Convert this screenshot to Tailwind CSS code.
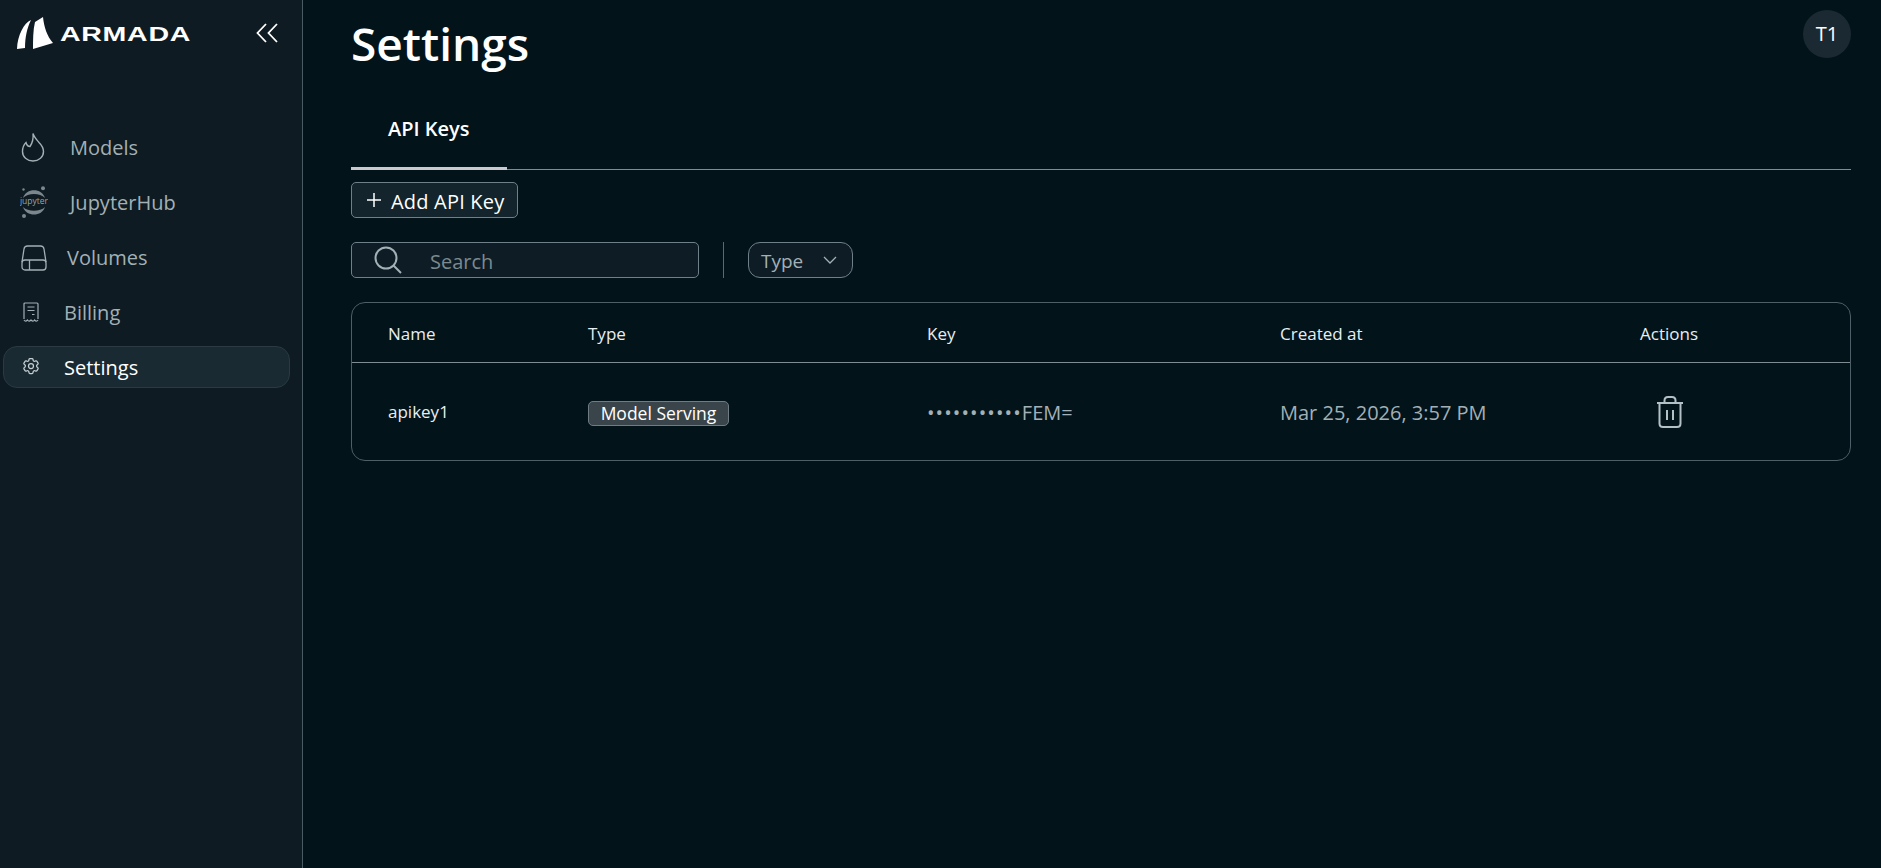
<!DOCTYPE html>
<html lang="en">
<head>
    <meta charset="UTF-8">
    <title>Armada - Settings</title>
    <script src="https://cdn.jsdelivr.net/npm/@tailwindcss/browser@4"></script>
</head>
<body class="bg-[#02131a] font-['Open_Sans',sans-serif] text-white overflow-hidden">
<div class="flex h-[868px]">
    <!-- sidebar -->
    <aside class="w-[303px] shrink-0 bg-[#0e1b22] border-r border-[#4a5a62] flex flex-col">
        <div class="flex items-center h-[66px]">
            <svg class="ml-[16px] w-[38px] h-[35px]" viewBox="0 0 38 35" fill="#fff"><path d="M15 4 C8 7 1.5 19 1 33 L9 32 C9 21 11 12 15 4Z"/><path d="M27 1 L19 6 C17 14 17 24 17 33 L37 27 C31 20 28 11 27 1Z"/></svg>
            <span class="ml-[6px] w-[130px] block font-['Liberation_Sans',sans-serif] font-bold text-[21px] leading-none tracking-[0.5px] scale-x-[1.36] origin-left">ARMADA</span>
            <svg class="ml-[66px] w-[22px] h-[20px] text-white" viewBox="0 0 22 20" fill="none" stroke="currentColor" stroke-width="1.8"><path d="M10 1 L1.5 10 L10 19"/><path d="M21 1 L12.5 10 L21 19"/></svg>
        </div>
        <nav class="mt-[54px] flex flex-col text-[20px] text-[#a3b0b5]">
            <a class="flex items-center h-[55px] pl-[21px]">
                <svg class="w-[24px] h-[30px] -mt-[2px]" viewBox="0 0 24 30" fill="none" stroke="currentColor" stroke-width="1.4"><path d="M12 1.5 C13 5 15.5 7.5 18 10.5 C21 13.5 22.5 16 22.5 19.5 C22.5 25 18 29 12 29 C6 29 1.5 25 1.5 19.5 C1.5 16 2.5 13 5 10.5 C5.5 12.5 7 14.5 9 14.5 C11 11.5 12.5 6 12 1.5Z"/></svg>
                <span class="ml-[25px]">Models</span>
            </a>
            <a class="flex items-center h-[55px] pl-[20px]">
                <svg class="w-[28px] h-[32px] -mt-[2px]" viewBox="0 0 28 32" fill="#7b878c">
                    <circle cx="3.5" cy="3.5" r="1.2"/><circle cx="23" cy="2.2" r="2"/><circle cx="4" cy="30" r="2"/>
                    <path d="M3 12 C6 1.5 22 1.5 25 12 C20 6.5 8 6.5 3 12Z"/>
                    <path d="M3 21 C8 26 20 26 25 21 C22 31 6 31 3 21Z"/>
                    <text x="14" y="18" text-anchor="middle" font-size="8.5" font-family="Open Sans" fill="#98a4a9">jupyter</text>
                </svg>
                <span class="ml-[22px]">JupyterHub</span>
            </a>
            <a class="flex items-center h-[55px] pl-[21px]">
                <svg class="w-[26px] h-[26px]" viewBox="0 0 26 26" fill="none" stroke="currentColor" stroke-width="1.3"><path d="M1 17 L3 4 C3.3 2 4.5 1 6.5 1 H19.5 C21.5 1 22.7 2 23 4 L25 17"/><rect x="1" y="15" width="24" height="10" rx="3"/><path d="M8.5 15 V25"/></svg>
                <span class="ml-[20px]">Volumes</span>
            </a>
            <a class="flex items-center h-[55px] pl-[23px]">
                <svg class="w-[16px] h-[20px] -mt-[2px]" viewBox="0 0 16 20" fill="none" stroke="currentColor" stroke-width="1.2"><path d="M1 17 V2 C1 1.3 1.3 1 2 1 H14 C14.7 1 15 1.3 15 2 V17"/><path d="M1 18 C2 19.5 3 19.5 4.5 18 C5.5 19.5 6.5 19.5 8 18 C9.5 19.5 10.5 19.5 11.5 18 C13 19.5 14 19.5 15 18"/><path d="M4.5 5 H11.5 M4.5 8.5 H11.5 M9 12.5 H11.5"/></svg>
                <span class="ml-[25px]">Billing</span>
            </a>
            <a class="flex items-center h-[42px] mt-[6px] ml-[3px] w-[287px] pl-[18px] rounded-[14px] bg-[#1a2a32] border border-[#2a3a42] text-white">
                <svg class="w-[20px] h-[20px] -mt-[3px] -ml-[1px]" viewBox="0 0 24 24" fill="none" stroke="#c5ced1" stroke-width="1.5"><path d="M9.594 3.94c.09-.542.56-.94 1.11-.94h2.593c.55 0 1.02.398 1.11.94l.213 1.281c.063.374.313.686.645.87.074.04.147.083.22.127.325.196.72.257 1.075.124l1.217-.456a1.125 1.125 0 0 1 1.37.49l1.296 2.247a1.125 1.125 0 0 1-.26 1.431l-1.003.827c-.293.241-.438.613-.43.992a7.723 7.723 0 0 1 0 .255c-.008.378.137.75.43.991l1.004.827c.424.35.534.955.26 1.43l-1.298 2.247a1.125 1.125 0 0 1-1.369.491l-1.217-.456c-.355-.133-.75-.072-1.076.124a6.47 6.47 0 0 1-.22.128c-.331.183-.581.495-.644.869l-.213 1.281c-.09.543-.56.94-1.11.94h-2.594c-.55 0-1.019-.398-1.11-.94l-.213-1.281c-.062-.374-.312-.686-.644-.87a6.52 6.52 0 0 1-.22-.127c-.325-.196-.72-.257-1.076-.124l-1.217.456a1.125 1.125 0 0 1-1.369-.49l-1.297-2.247a1.125 1.125 0 0 1 .26-1.431l1.004-.827c.292-.24.437-.613.43-.991a6.932 6.932 0 0 1 0-.255c.007-.38-.138-.751-.43-.992l-1.004-.827a1.125 1.125 0 0 1-.26-1.43l1.297-2.247a1.125 1.125 0 0 1 1.37-.491l1.216.456c.356.133.751.072 1.076-.124.072-.044.146-.086.22-.128.332-.183.582-.495.644-.869l.214-1.28Z"/><path d="M15 12a3 3 0 1 1-6 0 3 3 0 0 1 6 0Z"/></svg>
                <span class="ml-[23px] pt-[2px]">Settings</span>
            </a>
        </nav>
    </aside>

    <!-- main -->
    <main class="flex-1 pl-[48px] pr-[30px] relative">
        <h1 class="mt-[11px] h-[64px] leading-[64px] text-[46px] font-semibold">Settings</h1>
        <div class="absolute top-[10px] right-[30px] w-[48px] h-[48px] rounded-full bg-[#1b2a32] flex items-center justify-center text-[20px]">T1</div>

        <div class="mt-[25px] border-b border-[#7f8d93] flex h-[70px]">
            <div class="w-[156px] h-[70px] -mb-[1px] border-b-[3px] border-[#c9c9cf] pl-[37px] pt-[14px] text-[20px] font-semibold">API Keys</div>
        </div>

        <button class="mt-[12px] w-[167px] h-[36px] flex items-center pl-[14px] bg-[#13242c] border border-[#70808a] rounded-[5px] text-[20px]">
            <svg class="w-[16px] h-[16px]" viewBox="0 0 16 16" stroke="#fff" stroke-width="1.5"><path d="M8 1 V15 M1 8 H15"/></svg>
            <span class="ml-[9px] pt-[3px] tracking-[0.2px]">Add API Key</span>
        </button>

        <div class="mt-[24px] flex items-stretch h-[36px]">
            <div class="w-[348px] flex items-center pl-[22px] bg-[#0e1d25] border border-[#70808a] rounded-[5px] text-[20px] text-[#7c8a90]">
                <svg class="w-[30px] h-[30px] -ml-[1px]" viewBox="0 0 30 30" fill="none" stroke="#a3b0b5" stroke-width="2"><circle cx="13" cy="13" r="10.5"/><path d="M20.5 20.5 L28 28"/></svg>
                <span class="ml-[27px] pt-[3px]">Search</span>
            </div>
            <div class="ml-[24px] w-px bg-[#5a6a72]"></div>
            <div class="ml-[24px] w-[105px] flex items-center pl-[12px] bg-[#0e1d25] border border-[#70808a] rounded-[12px] text-[19px] text-[#a3b0b5]">
                <span class="pt-[2px]">Type</span>
                <svg class="ml-[20px] w-[14px] h-[8px]" viewBox="0 0 14 8" fill="none" stroke="currentColor" stroke-width="1.3"><path d="M1 1 L7 7 L13 1"/></svg>
            </div>
        </div>

        <div class="mt-[24px] h-[159px] border border-[#4f5f68] rounded-[14px]">
            <div class="grid grid-cols-[200px_339px_353px_360px_1fr] pl-[36px] pt-[2px] h-[60px] items-center border-b border-[#7f8d93] text-[17px] text-[#e8eef0]">
                <div>Name</div>
                <div>Type</div>
                <div>Key</div>
                <div>Created at</div>
                <div>Actions</div>
            </div>
            <div class="grid grid-cols-[200px_339px_353px_360px_1fr] pl-[36px] h-[97px] items-center text-[17px]">
                <div class="text-[#e8eef0]">apikey1</div>
                <div class="flex pt-[3px]"><span class="inline-flex items-center justify-center w-[141px] h-[25px] bg-[#3a444b] border border-[#6f7c84] rounded-[5px] text-[17.5px]">Model Serving</span></div>
                <div class="text-[20px] text-[#a3b0b5] pt-[2px]"><span class="tracking-[1.1px]">•••••••••••</span>FEM=</div>
                <div class="text-[20px] text-[#a3b0b5] pt-[2px]">Mar 25, 2026, 3:57 PM</div>
                <div class="pl-[16px]">
                    <svg class="w-[28px] h-[32px]" viewBox="0 0 28 32" fill="none" stroke="#b3c0c6" stroke-width="2"><path d="M1 7 H27"/><path d="M8.5 7 V4.5 C8.5 2.5 10 1 12 1 H16 C18 1 19.5 2.5 19.5 4.5 V7"/><path d="M3.5 7 V27.5 C3.5 29.5 5 31 7 31 H21 C23 31 24.5 29.5 24.5 27.5 V7"/><path d="M11 14 V24 M17 14 V24"/></svg>
                </div>
            </div>
        </div>
    </main>
</div>
</body>
</html>
